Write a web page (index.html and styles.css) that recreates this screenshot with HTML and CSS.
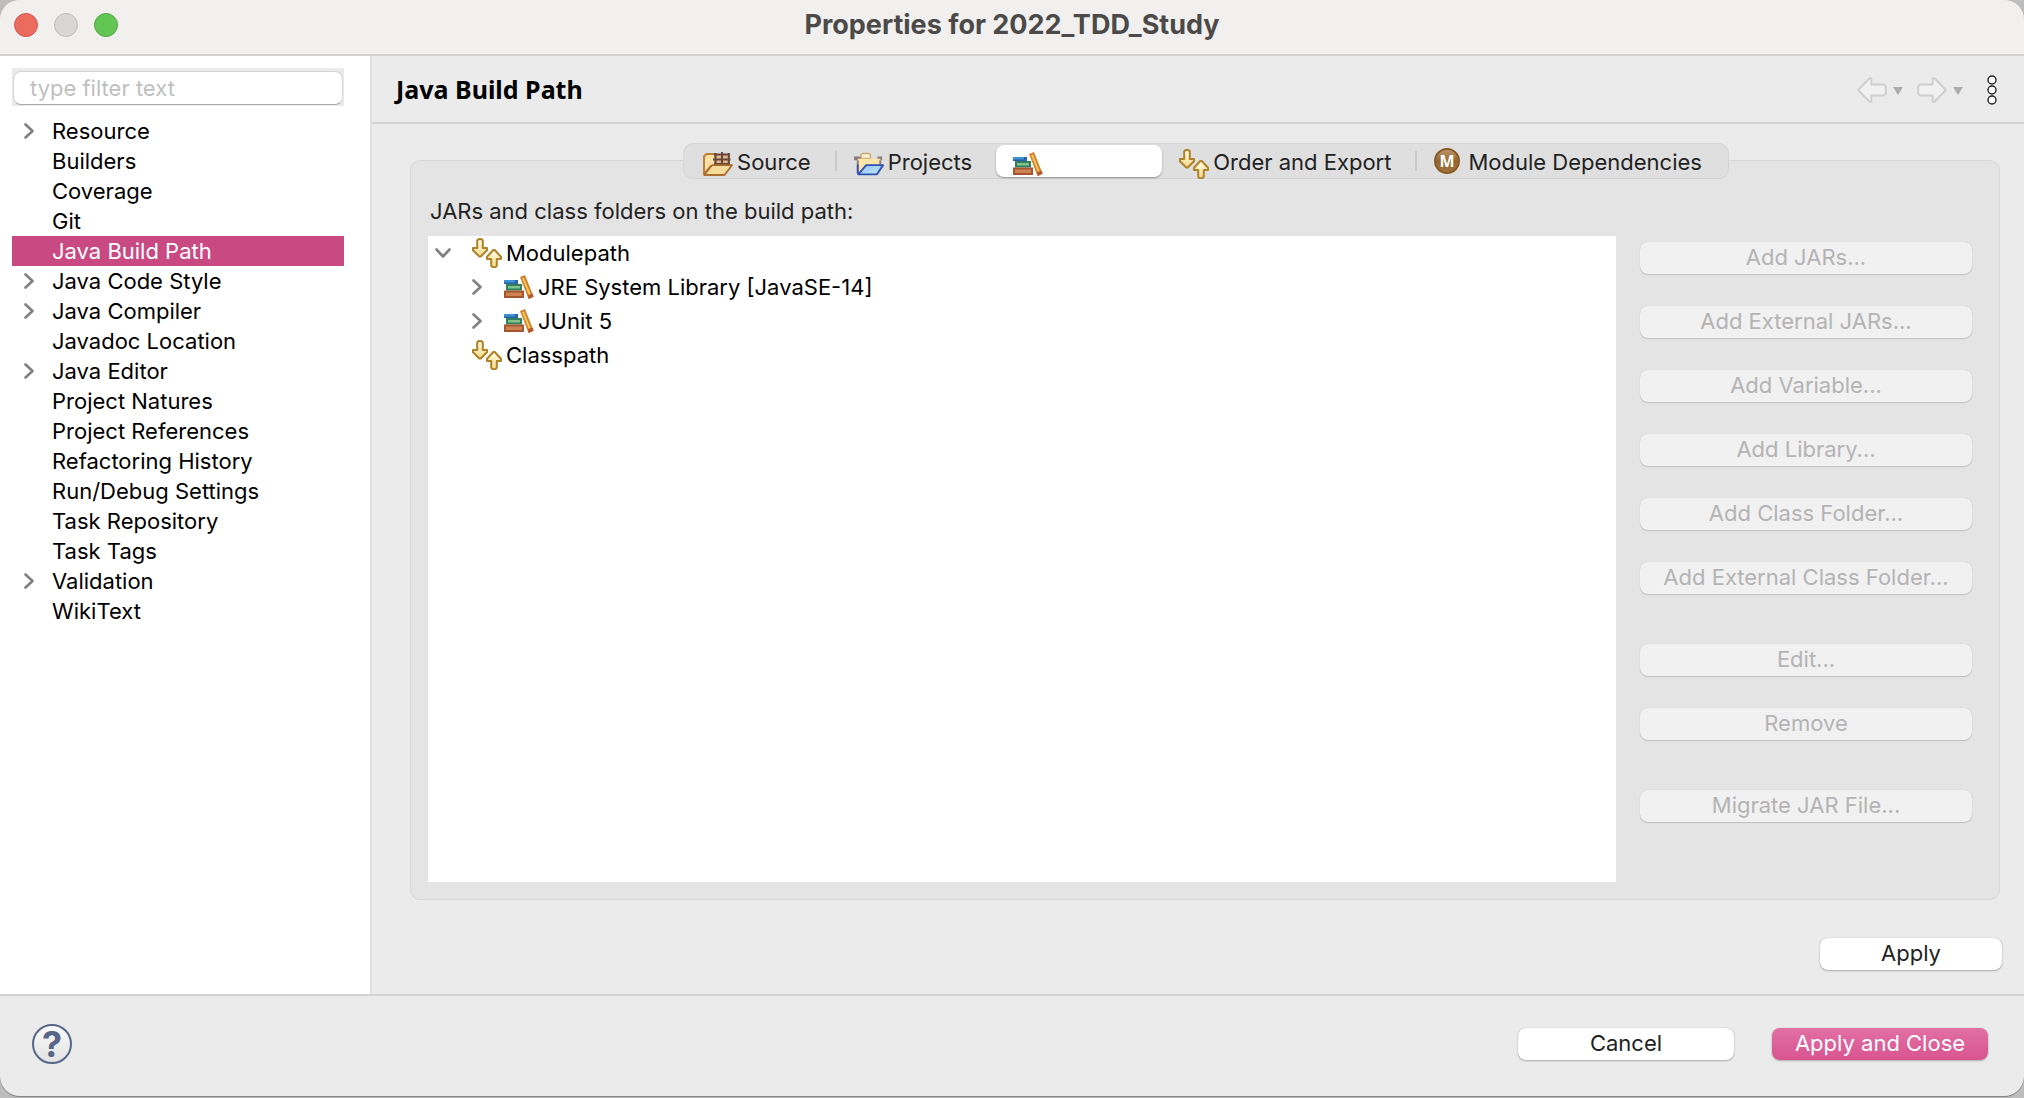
FILE: index.html
```html
<!DOCTYPE html>
<html lang="en">
<head>
<meta charset="utf-8">
<meta name="viewport" content="width=device-width, initial-scale=1">
<title>Properties for 2022_TDD_Study</title>
<link rel="stylesheet" href="styles.css">
</head>
<body>
<svg class="defs" aria-hidden="true">
  <defs>
    <linearGradient id="gold" x1="0" y1="0" x2="0" y2="1">
      <stop offset="0" stop-color="#fffbe6"/><stop offset="1" stop-color="#f3da8c"/>
    </linearGradient>
    <linearGradient id="sky" x1="0" y1="0" x2="1" y2="1">
      <stop offset="0" stop-color="#8fc4f5"/><stop offset="1" stop-color="#c4e6fb"/>
    </linearGradient>
    <linearGradient id="bronze" x1="0" y1="0" x2="0" y2="1">
      <stop offset="0" stop-color="#c09a70"/><stop offset="0.5" stop-color="#94672f"/><stop offset="1" stop-color="#a07440"/>
    </linearGradient>
    <symbol id="i-chevron" viewBox="0 0 10 16">
      <path d="M1.5 1.5 8.5 8l-7 6.5" fill="none" stroke="#808080" stroke-width="2.6" stroke-linecap="round" stroke-linejoin="round"/>
    </symbol>
    <symbol id="i-chevron-down" viewBox="0 0 16 10">
      <path d="M1.5 1.5 8 8.5l6.500-7" fill="none" stroke="#808080" stroke-width="2.6" stroke-linecap="round" stroke-linejoin="round"/>
    </symbol>
    <symbol id="i-order" viewBox="0 0 30 30">
      <g fill="url(#gold)" stroke="#b08226" stroke-width="2" stroke-linejoin="round">
        <path d="M5.200 2.500 6.700 1h2.600l1.500 1.500V10H15v2.200L8.700 18.500H7.300L1 12.200V10h4.200z"/>
        <path d="M19.200 27.800l1.500 1.400h2.600l1.500-1.400V21H29v-2.200L22.700 12h-1.400L15 18.800V21h4.200z"/>
      </g>
    </symbol>
    <symbol id="i-books" viewBox="0 0 30 24">
      <path d="M0 5h14v4H0z" fill="#2b62a6"/><path d="M0 5h11v2.500H0z" fill="#3c93cf"/>
      <path d="M2 9h16v6.500H2z" fill="#2f8061"/><path d="M4 11h12v2.500H4z" fill="#86c188"/>
      <path d="M0 15.500h20V23H0z" fill="#a75430"/><path d="M2 17.500h16V21H2z" fill="#cc8251"/>
      <path d="M16 2l5-2 8.500 21.500-5 2.500z" fill="#d48231"/>
      <path d="M18.200 3.200l1.600-.7L26.500 19l-1.700.8z" fill="#f5cb59"/>
      <path d="M23.800 20.500l4.700-2 1.200 3.200L25 24z" fill="#b9572f"/>
    </symbol>
    <symbol id="i-source" viewBox="0 0 30 24">
      <path d="M1 22V4.500L3.500 2H11l2 2.500h12V14H8z" fill="#f7e0a5" stroke="#bd7f38" stroke-width="2" stroke-linejoin="round"/>
      <path d="M11 3h16v10H11z" fill="#dcb98e"/>
      <path d="M10 7.500h17.500M11 2.500h16M11 12h16M12.500 1v12M19 0v13M25.800 1v12" stroke="#68443a" stroke-width="2" fill="none"/>
      <path d="M1.200 23 9 13.200h20L21.500 23z" fill="#f6dc9b" stroke="#aa6d2e" stroke-width="1.8" stroke-linejoin="round"/>
    </symbol>
    <symbol id="i-projects" viewBox="0 0 32 24">
      <path d="M7.500 6V2l1.500-1.200h7L17.500 2v4z" fill="#fdf1d0" stroke="#c7aa73" stroke-width="1.500"/>
      <path d="M0 4h7v3h18V4h5v4H0z" fill="#8d7b82"/>
      <path d="M4 6.500h24V14H13L4 22z" fill="#fbe5a9"/>
      <path d="M4 8v14M28 8v5" stroke="#8c7a83" stroke-width="2"/>
      <path d="M4 22V12.500" stroke="#3650b5" stroke-width="2"/>
      <path d="M4.500 23 13 13.200h18L24.500 23z" fill="url(#sky)" stroke="#2f4fb5" stroke-width="2" stroke-linejoin="round"/>
    </symbol>
    <symbol id="i-arrow" viewBox="0 0 30 26">
      <path d="M1.200 13 12.500 1.200h1.800v6.300h12.500l2 1.800v7.400l-2 1.800H14.300v6.300h-1.800z" fill="#f1f1f1" stroke="#cfcfcf" stroke-width="2" stroke-linejoin="round"/>
    </symbol>
    <symbol id="i-caret" viewBox="0 0 10 8">
      <path d="M0 0h10L5 8z" fill="#adadad"/>
    </symbol>
    <symbol id="i-dots" viewBox="0 0 10 30">
      <g fill="#fff" stroke="#222" stroke-width="1.400"><circle cx="5" cy="5" r="4"/><circle cx="5" cy="15" r="4"/><circle cx="5" cy="25" r="4"/></g>
    </symbol>
  </defs>
</svg>

<div class="window">
  <header class="titlebar">
    <div class="lights">
      <button class="light light-close" aria-label="Close"></button>
      <button class="light light-min" aria-label="Minimize" disabled></button>
      <button class="light light-zoom" aria-label="Zoom"></button>
    </div>
    <h1 class="title">Properties for 2022_TDD_Study</h1>
  </header>

  <div class="content">
    <nav class="sidebar">
      <div class="filter"><input class="filter-input" type="text" placeholder="type filter text" aria-label="Filter"></div>
      <ul class="nav-list">
        <li><a class="nav-item" href="#"><svg class="chevron"><use href="#i-chevron"/></svg>Resource</a></li>
        <li><a class="nav-item" href="#">Builders</a></li>
        <li><a class="nav-item" href="#">Coverage</a></li>
        <li><a class="nav-item" href="#">Git</a></li>
        <li><a class="nav-item selected" href="#" aria-current="page">Java Build Path</a></li>
        <li><a class="nav-item" href="#"><svg class="chevron"><use href="#i-chevron"/></svg>Java Code Style</a></li>
        <li><a class="nav-item" href="#"><svg class="chevron"><use href="#i-chevron"/></svg>Java Compiler</a></li>
        <li><a class="nav-item" href="#">Javadoc Location</a></li>
        <li><a class="nav-item" href="#"><svg class="chevron"><use href="#i-chevron"/></svg>Java Editor</a></li>
        <li><a class="nav-item" href="#">Project Natures</a></li>
        <li><a class="nav-item" href="#">Project References</a></li>
        <li><a class="nav-item" href="#">Refactoring History</a></li>
        <li><a class="nav-item" href="#">Run/Debug Settings</a></li>
        <li><a class="nav-item" href="#">Task Repository</a></li>
        <li><a class="nav-item" href="#">Task Tags</a></li>
        <li><a class="nav-item" href="#"><svg class="chevron"><use href="#i-chevron"/></svg>Validation</a></li>
        <li><a class="nav-item" href="#">WikiText</a></li>
      </ul>
    </nav>

    <main class="page">
      <div class="page-head">
        <h2 class="page-title">Java Build Path</h2>
        <div class="history">
          <button class="plain" aria-label="Back" disabled><svg class="arrow"><use href="#i-arrow"/></svg></button>
          <button class="plain" aria-label="Back history" disabled><svg class="caret"><use href="#i-caret"/></svg></button>
          <button class="plain forward" aria-label="Forward" disabled><svg class="arrow"><use href="#i-arrow"/></svg></button>
          <button class="plain" aria-label="Forward history" disabled><svg class="caret"><use href="#i-caret"/></svg></button>
          <button class="plain more" aria-label="View menu"><svg class="dots"><use href="#i-dots"/></svg></button>
        </div>
      </div>

      <div class="page-body">
        <div class="tabs" role="tablist">
          <button class="tab" role="tab"><svg class="ico-wide"><use href="#i-source"/></svg>Source</button>
          <span class="tab-rule"></span>
          <button class="tab" role="tab"><svg class="ico-wide"><use href="#i-projects"/></svg>Projects</button>
          <button class="tab active" role="tab" aria-selected="true" aria-label="Libraries"><svg class="ico-wide"><use href="#i-books"/></svg></button>
          <button class="tab" role="tab"><svg class="ico-order"><use href="#i-order"/></svg>Order and Export</button>
          <span class="tab-rule"></span>
          <button class="tab" role="tab"><svg class="ico-module" viewBox="0 0 26 26"><circle cx="13" cy="13" r="12" fill="url(#bronze)" stroke="#8a5a26" stroke-width="2"/><text class="module-letter" x="13" y="19" text-anchor="middle">M</text></svg>Module Dependencies</button>
        </div>

        <section class="panel">
          <p class="panel-label" id="jars-label">JARs and class folders on the build path:</p>
          <div class="panel-main">
            <ul class="entries" role="tree" aria-labelledby="jars-label">
              <li class="entry" role="treeitem" aria-expanded="true"><svg class="chevron-down"><use href="#i-chevron-down"/></svg><svg class="ico-order"><use href="#i-order"/></svg>Modulepath</li>
              <li class="entry child" role="treeitem"><svg class="chevron"><use href="#i-chevron"/></svg><svg class="ico-wide"><use href="#i-books"/></svg>JRE System Library [JavaSE-14]</li>
              <li class="entry child" role="treeitem"><svg class="chevron"><use href="#i-chevron"/></svg><svg class="ico-wide"><use href="#i-books"/></svg>JUnit 5</li>
              <li class="entry leaf" role="treeitem"><svg class="ico-order"><use href="#i-order"/></svg>Classpath</li>
            </ul>
            <div class="actions">
              <div class="action-group">
                <button class="btn" disabled>Add JARs...</button>
                <button class="btn" disabled>Add External JARs...</button>
                <button class="btn" disabled>Add Variable...</button>
                <button class="btn" disabled>Add Library...</button>
                <button class="btn" disabled>Add Class Folder...</button>
                <button class="btn" disabled>Add External Class Folder...</button>
              </div>
              <div class="action-group">
                <button class="btn" disabled>Edit...</button>
                <button class="btn" disabled>Remove</button>
              </div>
              <div class="action-group">
                <button class="btn" disabled>Migrate JAR File...</button>
              </div>
            </div>
          </div>
        </section>

        <div class="apply-row"><button class="btn btn-apply">Apply</button></div>
      </div>
    </main>
  </div>

  <footer class="footer">
    <button class="help" aria-label="Help">?</button>
    <div class="footer-actions">
      <button class="btn btn-footer">Cancel</button>
      <button class="btn btn-footer primary">Apply and Close</button>
    </div>
  </footer>
</div>
</body>
</html>
```

FILE: styles.css
```css
* { box-sizing: border-box; }

body {
  margin: 0;
  min-height: 100vh;
  display: flex;
  padding-bottom: 2px;
  background: #bdbdbd;
  font: 22px/30px Inter, "Liberation Sans", sans-serif;
  color: #000;
}

button, input { font: inherit; color: inherit; }
button { border: 0; margin: 0; padding: 0; background: none; }
ul { list-style: none; margin: 0; padding: 0; }
svg { display: block; flex: none; }
.defs { position: absolute; width: 0; height: 0; }

.window {
  flex: 1;
  display: flex;
  flex-direction: column;
  overflow: hidden;
  border-radius: 20px;
  background: #ebebeb;
  box-shadow: 0 1px 1px #808080;
}

/* Title bar */
.titlebar {
  display: grid;
  grid-template-columns: 1fr auto 1fr;
  align-items: center;
  height: 56px;
  padding: 0 14px 4px;
  background: #f1f0ee;
  border-bottom: 2px solid #d2d1cf;
}
.lights { display: flex; gap: 16px; }
.light { width: 24px; height: 24px; border-radius: 50%; border: 1px solid; }
.light-close { background: #ec6b5f; border-color: #d5564b; }
.light-min { background: #d8d7d5; border-color: #bdbcba; }
.light-zoom { background: #62c554; border-color: #52a943; }
.title { margin: 0; font-size: 27px; line-height: 30px; font-weight: 700; color: #4b4a49; }

/* Sidebar */
.content { flex: 1; display: flex; }
.sidebar {
  flex: none;
  width: 372px;
  padding: 12px 26px 12px 12px;
  background: #fff;
  border-right: 2px solid #e0e0e0;
}
.filter { padding: 3px 1px 1px; margin-bottom: 10px; background: #ebebeb; }
.filter-input {
  display: block;
  width: 100%;
  height: 34px;
  padding: 0 16px;
  border: 1px solid #d4d4d4;
  border-bottom-color: #aaa;
  border-radius: 8px;
  background: #fff;
}
.filter-input::placeholder { color: #bfbfbf; opacity: 1; }
.nav-item {
  display: flex;
  align-items: center;
  height: 30px;
  padding-left: 40px;
  color: #000;
  text-decoration: none;
}
.nav-item .chevron { margin: 0 18px 0 -28px; }
.nav-item.selected { background: #c94a82; color: #fff; }
.chevron { width: 10px; height: 16px; }
.chevron-down { width: 16px; height: 10px; }

/* Page */
.page { flex: 1; display: flex; flex-direction: column; min-width: 0; }
.page-head {
  display: flex;
  align-items: center;
  justify-content: space-between;
  height: 68px;
  padding: 0 27px 0 24px;
  border-bottom: 2px solid #d3d3d3;
}
.page-title { margin: 0; font: 700 25px/32px "Noto Sans", "Open Sans", sans-serif; }
.history { display: flex; align-items: center; gap: 6px; padding-top: 2px; }
.arrow { width: 30px; height: 26px; }
.forward { margin-left: 8px; }
.forward .arrow { transform: scaleX(-1); }
.caret { width: 10px; height: 8px; margin-top: 2px; }
.more { margin-left: 18px; }
.dots { width: 10px; height: 30px; }

.page-body {
  flex: 1;
  display: flex;
  flex-direction: column;
  padding: 19px 22px 24px 38px;
}

/* Tabs straddle the top edge of the panel */
.tabs {
  position: relative;
  align-self: center;
  display: flex;
  align-items: center;
  height: 36px;
  margin-bottom: -19px;
  padding: 0 2px;
  border: 1px solid #d5d5d5;
  border-radius: 10px;
  background: #dfdfdf;
}
.tab {
  display: flex;
  align-items: center;
  gap: 4px;
  height: 32px;
  padding: 2px 24px 0 17px;
  border-radius: 8px;
  color: #222;
}
.tab.active {
  width: 166px;
  background: #fff;
  box-shadow: 0 1px 2px rgba(0, 0, 0, 0.35);
}
.tab-rule { width: 2px; height: 20px; background: #cbcbcb; }
.ico-wide { width: 30px; height: 24px; }
.ico-order { width: 30px; height: 30px; }
.tab .ico-wide, .tab .ico-order { margin-top: 4px; }
.ico-module { width: 26px; height: 26px; margin: 0 4px 2px 0; }
.module-letter { font: 700 16px "Noto Sans", sans-serif; fill: #fff; }

/* Panel */
.panel {
  flex: 1;
  display: flex;
  flex-direction: column;
  margin-right: 2px;
  padding: 35px 27px 17px 17px;
  border: 1px solid #d8d8d8;
  border-radius: 10px;
  background: #e4e4e4;
}
.panel-label { margin: 0 0 10px 2px; color: #222; }
.panel-main { flex: 1; display: flex; gap: 24px; }
.entries { flex: 1; background: #fff; }
.entry { display: flex; align-items: center; gap: 4px; height: 34px; padding-left: 7px; }
.entry .chevron-down { margin-right: 17px; }
.entry.leaf { padding-left: 44px; }
.entry.child { padding-left: 44px; }
.entry .chevron { margin-right: 18px; }

.actions { width: 332px; padding-top: 6px; display: flex; flex-direction: column; gap: 50px; }
.action-group { display: flex; flex-direction: column; gap: 32px; }

.btn {
  height: 32px;
  padding-bottom: 2px;
  border-radius: 8px;
  background: #fff;
  color: #222;
  line-height: 30px;
  box-shadow: 0 0 1px rgba(0, 0, 0, 0.3), 0 1px 2px rgba(0, 0, 0, 0.25);
}
.btn:disabled { background: #f1f1f1; color: #b4b4b4; box-shadow: 0 0 1px rgba(0, 0, 0, 0.15), 0 1px 1px rgba(0, 0, 0, 0.15); }
.apply-row { display: flex; justify-content: flex-end; padding-top: 38px; }
.btn-apply { width: 182px; }

/* Footer */
.footer {
  display: flex;
  align-items: center;
  justify-content: space-between;
  height: 102px;
  padding: 0 36px 4px 32px;
  border-top: 2px solid #d3d3d3;
}
.help {
  width: 40px;
  height: 40px;
  border: 2px solid #56678a;
  border-radius: 50%;
  background: linear-gradient(#fafafa, #e2e2e2);
  color: #56678a;
  font-size: 36px;
  line-height: 36px;
  font-weight: 700;
}
.footer-actions { display: flex; gap: 38px; }
.btn-footer { width: 216px; }
.btn.primary { background: linear-gradient(#e070a5, #d95490); color: #fff; }
```
